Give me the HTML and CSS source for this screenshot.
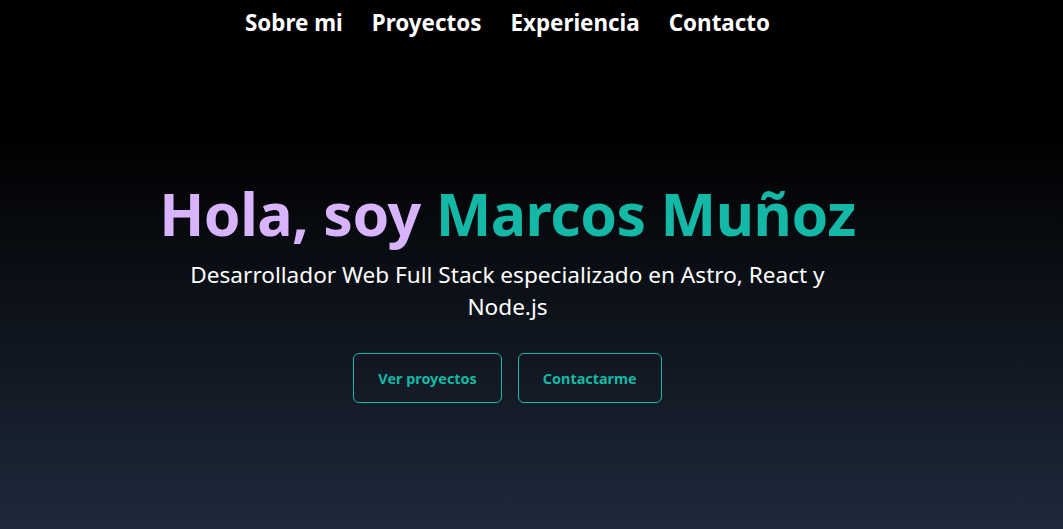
FILE: index.html
```html
<!DOCTYPE html>
<html lang="es">
<head>
<meta charset="utf-8">
<title>Marcos Muñoz</title>
<link rel="stylesheet" href="styles.css">
</head>
<body>
<div class="page">
  <nav class="nav">
    <a href="#sobre">Sobre mi</a>
    <a href="#proyectos">Proyectos</a>
    <a href="#experiencia">Experiencia</a>
    <a href="#contacto">Contacto</a>
  </nav>
  <section class="hero">
    <h1 class="title"><span class="purple">Hola, soy</span> <span class="teal">Marcos Muñoz</span></h1>
    <p class="subtitle">Desarrollador Web Full Stack especializado en Astro, React y Node.js</p>
    <div class="actions">
      <a class="btn" href="#proyectos">Ver proyectos</a>
      <a class="btn" href="#contacto">Contactarme</a>
    </div>
  </section>
</div>
</body>
</html>
```

FILE: styles.css
```css
html, body {
  margin: 0;
  padding: 0;
  height: 100%;
}
body {
  background: linear-gradient(to bottom, #000 25%, #1e293b 100%);
  font-family: "Noto Sans", "Open Sans", sans-serif;
  color: #fff;
}
.page {
  padding-right: 48px;
  display: flex;
  flex-direction: column;
  align-items: center;
}
.nav {
  display: flex;
  gap: 29px;
  padding-top: 8px;
}
.nav a {
  color: #fff;
  text-decoration: none;
  font-weight: 700;
  font-size: 22.4px;
  line-height: 30px;
}
.hero {
  display: flex;
  flex-direction: column;
  align-items: center;
  margin-top: 139px;
}
.title {
  margin: 0;
  font-size: 59px;
  font-weight: 700;
  line-height: 72px;
  letter-spacing: -0.5px;
}
.purple { color: #d8b4fe; }
.teal { color: #14b8a6; }
.subtitle {
  margin: 10px 0 0;
  max-width: 660px;
  text-align: center;
  font-size: 22.6px;
  line-height: 32px;
}
.actions {
  display: flex;
  gap: 16px;
  margin-top: 30px;
}
.btn {
  display: flex;
  align-items: center;
  justify-content: center;
  height: 50px;
  box-sizing: border-box;
  padding: 0 24px;
  border: 1px solid #14b8a6;
  border-radius: 6px;
  color: #14b8a6;
  text-decoration: none;
  font-weight: 700;
  font-size: 14.4px;
}
```
